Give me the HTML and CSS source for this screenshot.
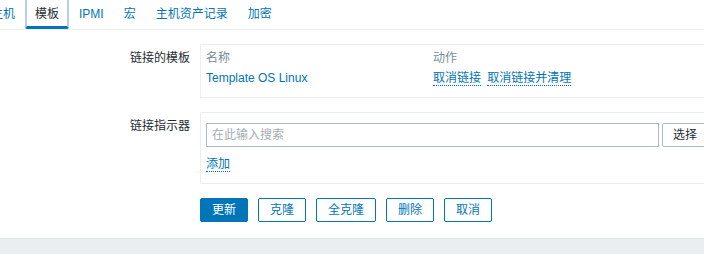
FILE: index.html
```html
<!DOCTYPE html>
<html>
<head>
  <title>主机 - 模板</title>
  <meta charset="UTF-8">
  <meta name="viewport" content="width=device-width,initial-scale=1">
  <link rel="stylesheet" href="styles.css">
</head>

<body>
  <div class="page">
    <ul class="tabs">
      <li><a href="#">主机</a></li>
      <li class="active"><a href="#">模板</a></li>
      <li><a href="#">IPMI</a></li>
      <li><a href="#">宏</a></li>
      <li><a href="#">主机资产记录</a></li>
      <li><a href="#">加密</a></li>
    </ul>

    <form class="form-list">
      <label class="form-label">链接的模板</label>
      <div class="form-box">
        <div class="linked">
          <span class="th">名称</span>
          <span class="th">动作</span>
          <a href="#" class="plain-link">Template OS Linux</a>
          <span>
            <a href="#" class="dotted-link">取消链接</a>
            <a href="#" class="dotted-link">取消链接并清理</a>
          </span>
        </div>
      </div>

      <label class="form-label">链接指示器</label>
      <div class="form-box box-search">
        <div class="search-row">
          <input type="text" class="search" placeholder="在此输入搜索">
          <button type="button" class="btn-grey">选择</button>
        </div>
        <div class="add-row"><a href="#" class="dotted-link">添加</a></div>
      </div>

      <div></div>
      <div class="buttons">
        <button type="button" class="btn primary">更新</button>
        <button type="button" class="btn">克隆</button>
        <button type="button" class="btn">全克隆</button>
        <button type="button" class="btn">删除</button>
        <button type="button" class="btn">取消</button>
      </div>
    </form>
  </div>

  <div class="footer"></div>
</body>
</html>
```

FILE: styles.css
```css
*, *:before, *:after {
  box-sizing: border-box;
}

html, body {
  margin: 0;
  overflow: hidden;
}

body {
  background: #fff;
  color: #1f2c33;
  font-family: "Liberation Sans", "Noto Sans CJK SC", sans-serif;
  font-size: 12px;
  line-height: 16px;
}

a {
  color: #0275b8;
  text-decoration: none;
}

/* tabs */
.tabs {
  display: flex;
  margin: 0;
  padding: 0;
  list-style: none;
  border-bottom: 1px solid #ebeef0;
}

.tabs li:first-child {
  margin-left: -19px;
}

.tabs a {
  display: block;
  padding: 2px 10px 0;
  line-height: 24px;
  border-bottom: 3px solid transparent;
}

.tabs .active a {
  padding: 2px 8px 0;
  color: #1f2c33;
  border-left: 2px solid #b3cdf6;
  border-right: 2px solid #b3cdf6;
  border-bottom-color: #0275b8;
  border-radius: 0 0 2px 2px;
}

/* form */
.form-list {
  display: grid;
  grid-template-columns: 190px 530px;
  column-gap: 10px;
  row-gap: 14px;
  padding-top: 14px;
}

.form-label {
  text-align: right;
  padding-top: 6px;
}

.form-box {
  border: 1px solid #ebeef0;
  padding: 5px 5px 11px;
}

.linked {
  display: grid;
  grid-template-columns: 227px 1fr;
  row-gap: 4px;
}

.th {
  color: #768d99;
}

.dotted-link {
  border-bottom: 1px dotted #0275b8;
  margin-right: 3px;
}

.box-search {
  padding-top: 10px;
}

.search-row {
  display: flex;
  gap: 3px;
}

.search {
  width: 453px;
  height: 24px;
  margin: 0;
  padding: 0 5px;
  border: 1px solid #acbbc2;
  font: inherit;
  color: #1f2c33;
}

.search::placeholder {
  color: #a5aeb3;
}

.btn-grey {
  height: 24px;
  padding: 0 10px;
  margin: 0;
  background: #fff;
  border: 1px solid #acbbc2;
  border-radius: 2px;
  color: #1f2c33;
  font: inherit;
  white-space: nowrap;
}

.add-row {
  margin-top: 9px;
}

.buttons {
  display: flex;
  gap: 10px;
}

.btn {
  height: 24px;
  padding: 0 11px;
  margin: 0;
  background: #fff;
  border: 1px solid #0275b8;
  border-radius: 2px;
  color: #0275b8;
  font: inherit;
}

.btn.primary {
  background: #0275b8;
  color: #fff;
}

.footer {
  margin-top: 16px;
  height: 16px;
  background: #ebeef0;
  border-top: 1px solid #dfe4e7;
}
```
